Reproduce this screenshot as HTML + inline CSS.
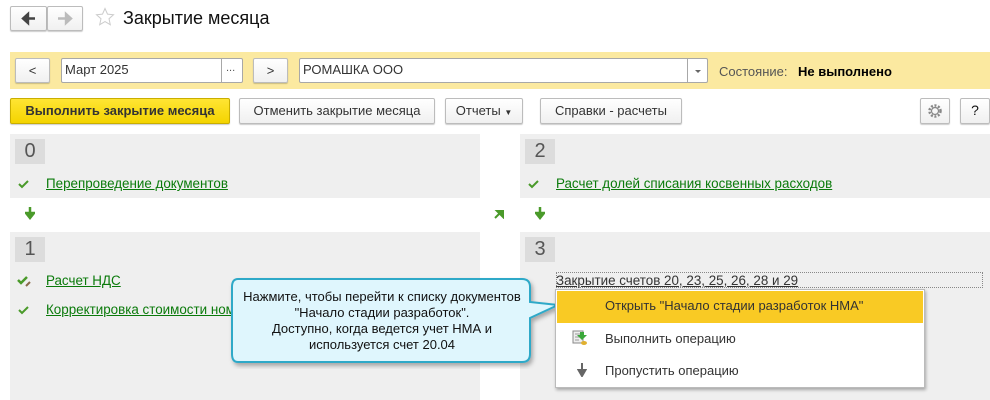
<!DOCTYPE html>
<html><head><meta charset="utf-8"><style>
*{box-sizing:border-box;margin:0;padding:0}
body{width:990px;height:400px;background:#fff;font-family:"Liberation Sans",Arial,sans-serif;font-size:13px;color:#333;position:relative;overflow:hidden}
.a{position:absolute}
.btn{position:absolute;background:linear-gradient(#fff,#f0f0f0);border:1px solid #bcbcbc;border-radius:2px;box-shadow:0 1px 1px rgba(0,0,0,.2);text-align:center;line-height:23px;color:#333}
.inp{position:absolute;background:#fff;border:1px solid #a8a8a8;border-radius:2px;line-height:22px;padding-left:3px;color:#333}
.panel{position:absolute;background:#efefef}
.num{position:absolute;left:5px;top:5px;width:30px;height:25px;background:#dcdcdc;font-size:20px;line-height:25px;text-align:center;color:#555}
.lnk{position:absolute;color:#0a7a0a;text-decoration:underline;white-space:nowrap;font-size:13.4px}
.chk{position:absolute}
</style></head><body>
<div class="btn" style="left:10px;top:6px;width:37px;height:25px"><svg width="35" height="23"><path d="M12 11.5h12M12 11.5l5-4.5v9z" stroke="#444" stroke-width="2.4" fill="#444"/></svg></div>
<div class="btn" style="left:47px;top:6px;width:36px;height:25px"><svg width="34" height="23"><path d="M10 11.5h11M23 11.5l-5-4.5v9z" stroke="#bbb" stroke-width="2.4" fill="#bbb"/></svg></div>
<svg class="a" style="left:95px;top:7px" width="20" height="20"><path d="M10 1.5l2.5 5.6 6 .6-4.5 4 1.3 6-5.3-3.1-5.3 3.1 1.3-6-4.5-4 6-.6z" fill="none" stroke="#ccc"/></svg>
<div class="a" style="left:123px;top:8px;font-size:18px;color:#111">Закрытие месяца</div>

<div class="a" style="left:10px;top:52px;width:980px;height:37px;background:#fbe9a0"></div>
<div class="btn" style="left:15px;top:58px;width:35px;height:25px">&lt;</div>
<div class="inp" style="left:61px;top:58px;width:182px;height:25px">Март 2025</div>
<div class="a" style="left:221px;top:59px;width:1px;height:23px;background:#a8a8a8"></div>
<div class="a" style="left:226px;top:62px;font-size:11px;color:#555">...</div>
<div class="btn" style="left:253px;top:58px;width:35px;height:25px">&gt;</div>
<div class="inp" style="left:299px;top:58px;width:409px;height:25px">РОМАШКА ООО</div>
<div class="a" style="left:687px;top:59px;width:1px;height:23px;background:#a8a8a8"></div>
<div class="a" style="left:695px;top:70px;width:0;height:0;border-left:3px solid transparent;border-right:3px solid transparent;border-top:3px solid #666"></div>
<div class="a" style="left:719px;top:64px;color:#555">Состояние:</div>
<div class="a" style="left:798px;top:64px;color:#000;font-weight:bold">Не выполнено</div>

<div class="btn" style="left:10px;top:98px;width:220px;height:26px;background:linear-gradient(#ffe533,#f4d400);border-color:#c9ae00;font-weight:bold;color:#333">Выполнить закрытие месяца</div>
<div class="btn" style="left:239px;top:98px;width:196px;height:26px">Отменить закрытие месяца</div>
<div class="btn" style="left:445px;top:98px;width:78px;height:26px">Отчеты <span style="font-size:8px">▼</span></div>
<div class="btn" style="left:540px;top:98px;width:142px;height:26px">Справки - расчеты</div>
<div class="btn" style="left:920px;top:98px;width:30px;height:26px"><svg width="28" height="24"><circle cx="14" cy="12" r="5.5" fill="none" stroke="#888" stroke-width="2.5" stroke-dasharray="2 1.6"/><circle cx="14" cy="12" r="3.5" fill="none" stroke="#888" stroke-width="1.2"/></svg></div>
<div class="btn" style="left:960px;top:98px;width:30px;height:26px;color:#111;font-size:14px">?</div>

<div class="panel" style="left:10px;top:134px;width:470px;height:64px"><div class="num">0</div></div>
<svg class="chk" style="left:18px;top:179px" width="12" height="10"><path d="M1 5l3 3 6-6" stroke="#4a9a2a" stroke-width="2" fill="none"/></svg>
<div class="lnk" style="left:46px;top:176px">Перепроведение документов</div>
<div class="panel" style="left:520px;top:134px;width:470px;height:64px"><div class="num">2</div></div>
<svg class="chk" style="left:528px;top:179px" width="12" height="10"><path d="M1 5l3 3 6-6" stroke="#4a9a2a" stroke-width="2" fill="none"/></svg>
<div class="lnk" style="left:556px;top:176px">Расчет долей списания косвенных расходов</div>

<svg class="a" style="left:25px;top:207px" width="10" height="13"><path d="M5 0v8M1 6l4 5 4-5z" stroke="#4a9a2a" stroke-width="2.5" fill="#4a9a2a"/></svg>
<svg class="a" style="left:535px;top:207px" width="10" height="13"><path d="M5 0v8M1 6l4 5 4-5z" stroke="#4a9a2a" stroke-width="2.5" fill="#4a9a2a"/></svg>
<svg class="a" style="left:494px;top:209px" width="10" height="10"><path d="M1 9l6-6M3 2h6v6z" stroke="#4a9a2a" stroke-width="2" fill="#4a9a2a"/></svg>

<div class="panel" style="left:10px;top:232px;width:470px;height:168px"><div class="num">1</div></div>
<svg class="chk" style="left:17px;top:275px" width="16" height="12"><path d="M1 5l3 3 6-6" stroke="#4a9a2a" stroke-width="2.5" fill="none"/><path d="M9 11l4-4" stroke="#8a6a4a" stroke-width="2"/></svg>
<div class="lnk" style="left:46px;top:273px">Расчет НДС</div>
<svg class="chk" style="left:18px;top:305px" width="12" height="10"><path d="M1 5l3 3 6-6" stroke="#4a9a2a" stroke-width="2" fill="none"/></svg>
<div class="lnk" style="left:46px;top:302px">Корректировка стоимости номенклатуры</div>
<div class="panel" style="left:520px;top:232px;width:470px;height:168px"><div class="num">3</div></div>
<div class="a" style="left:556px;top:272px;width:427px;height:16px;border:1px dotted #888"></div>
<div class="a" style="left:556px;top:273px;text-decoration:underline;color:#333;font-size:13.4px">Закрытие счетов 20, 23, 25, 26, 28 и 29</div>

<svg class="a" style="left:228px;top:274px" width="340" height="95">
<defs><filter id="s"><feDropShadow dx="2" dy="3" stdDeviation="2" flood-opacity=".3"/></filter></defs>
<path d="M10 5 H294 Q302 5 302 13 V28 L330 31 L302 44 V80 Q302 88 294 88 H10 Q4 88 4 80 V13 Q4 5 10 5Z" fill="#dff6fd" stroke="#2fa9c8" stroke-width="2" filter="url(#s)"/>
</svg>
<div class="a" style="left:232px;top:289px;width:300px;text-align:center;color:#111;line-height:16px;font-size:13px">Нажмите, чтобы перейти к списку документов<br>"Начало стадии разработок".<br>Доступно, когда ведется учет НМА и<br>используется счет 20.04</div>

<div class="a" style="left:555px;top:289px;width:370px;height:99px;background:#fff;border:1px solid #bbb;box-shadow:1px 2px 3px rgba(0,0,0,.3)"></div>
<div class="a" style="left:557px;top:291px;width:366px;height:32px;background:#f9ca24"></div>
<div class="a" style="left:605px;top:298px;color:#333">Открыть "Начало стадии разработок НМА"</div>
<svg class="a" style="left:572px;top:330px" width="16" height="16"><rect x="1" y="1" width="10" height="12" fill="#eee" stroke="#888"/><path d="M3 4h6M3 7h6M3 10h4" stroke="#999"/><path d="M8 2h4v3h3l-5 5-5-5h3z" fill="#3aa83a"/><ellipse cx="12" cy="13" rx="3" ry="2" fill="#e0b030"/></svg>
<div class="a" style="left:605px;top:331px;color:#333">Выполнить операцию</div>
<svg class="a" style="left:577px;top:363px" width="10" height="14"><path d="M5 0v9M1.5 7l3.5 6 3.5-6z" stroke="#666" stroke-width="2" fill="#666"/></svg>
<div class="a" style="left:605px;top:363px;color:#333">Пропустить операцию</div>
</body></html>
